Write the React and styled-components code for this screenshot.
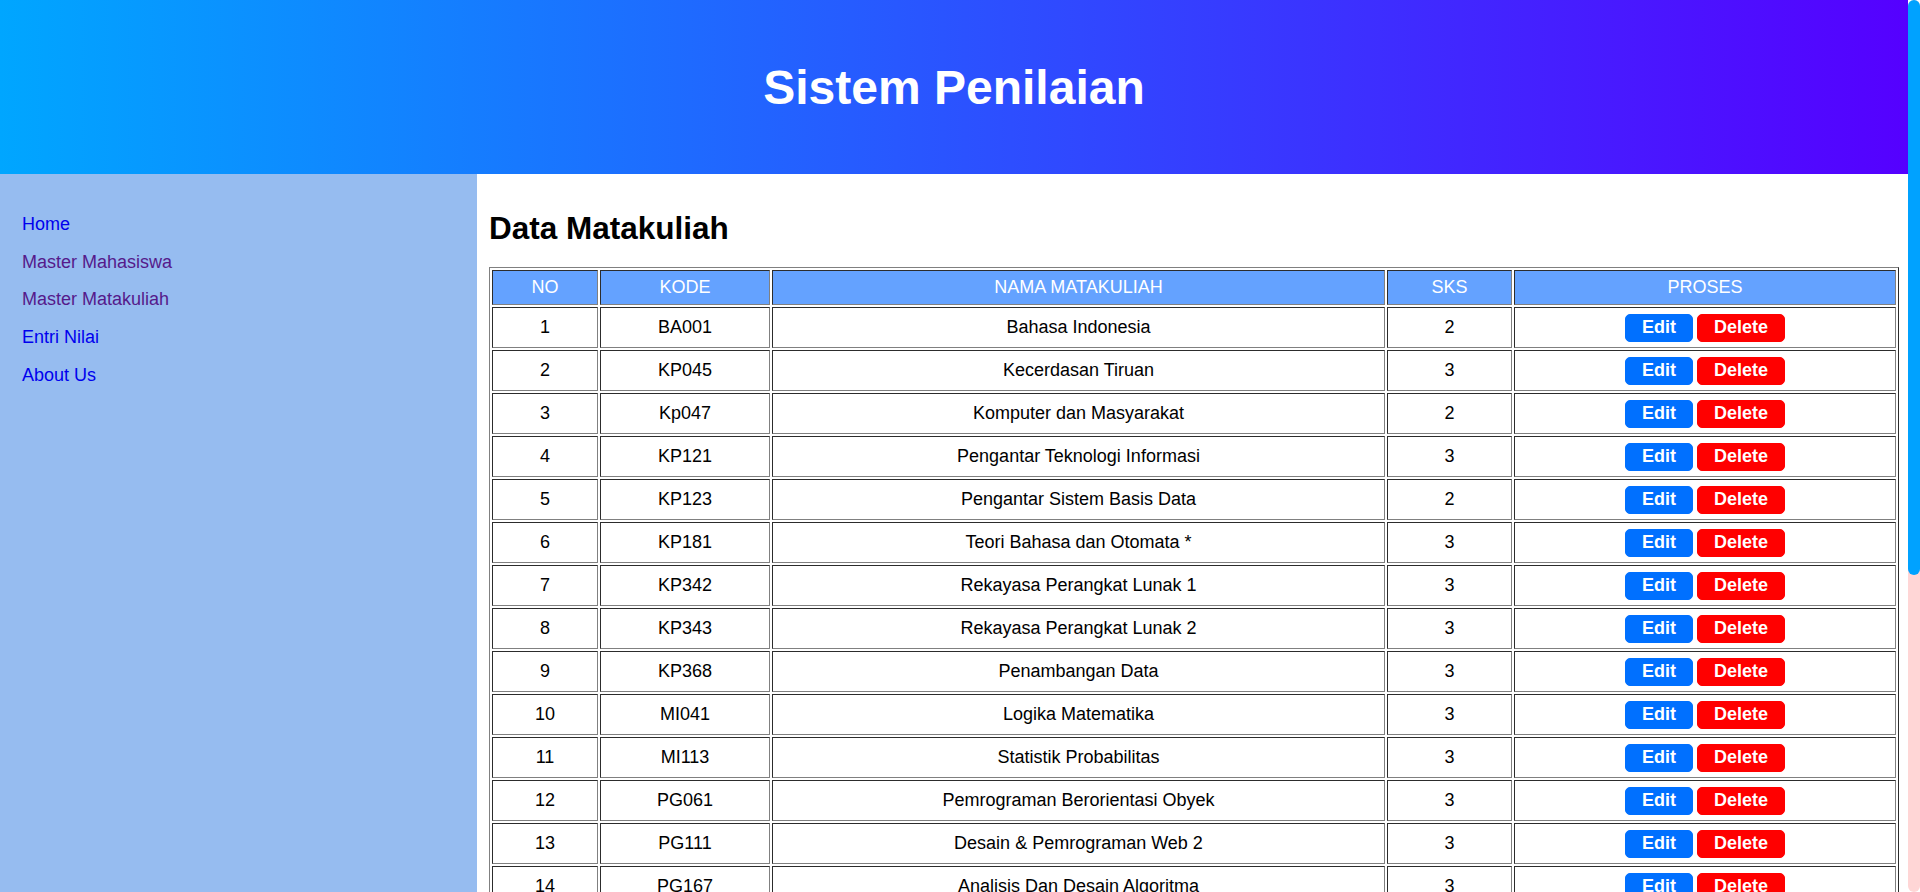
import React from "react";
import styled, { createGlobalStyle } from "styled-components";

const GlobalStyle = createGlobalStyle`
  html, body {
    margin: 0;
    padding: 0;
  }
  body {
    font-family: "Liberation Sans", Arial, sans-serif;
    font-size: 18px;
    color: #000;
    background: #fff;
    margin-right: 12px;
  }
`;

// the page scrollbar as it looks in the browser (custom styled)
const ScrollTrack = styled.div`
  position: fixed;
  top: 0;
  right: 0;
  width: 12px;
  height: 100vh;
  background: #ffd6d6;
  border-radius: 6px;
`;

const ScrollThumb = styled.div`
  width: 12px;
  height: 575px;
  background: #00a2ff;
  border-radius: 6px;
`;

const Header = styled.header`
  height: 174px;
  display: flex;
  align-items: center;
  justify-content: center;
  background: linear-gradient(to right, #00a6ff, #5500ff);
`;

const Title = styled.h1`
  margin: 0;
  color: #fff;
  font-size: 48px;
  font-weight: bold;
`;

const Layout = styled.div`
  display: grid;
  grid-template-columns: 25% 75%;
`;

const Sidebar = styled.nav`
  background: #96bcf0;
  padding: 40px 0 0 22px;
  display: flex;
  flex-direction: column;
  gap: 17px;
`;

const NavLink = styled.a`
  font-size: 18px;
  line-height: 20.7px;
  text-decoration: none;
  color: ${props => (props.visited ? "#551a8b" : "#0000ee")};
`;

const Main = styled.main`
  padding: 0 10px 12px 12px;
`;

const Heading = styled.h2`
  margin: 36px 0 20px;
  font-size: 31.5px;
  line-height: 37px;
  font-weight: bold;
`;

const Table = styled.table`
  width: 100%;
  table-layout: fixed;
  border: 1px outset gray;
  border-spacing: 2px;
`;

const Col = styled.col`
  width: ${props => props.w}px;
`;

const Th = styled.th`
  background: #64a2ff;
  color: #fff;
  font-weight: normal;
  font-size: 18px;
  padding: 6px 5px;
  border: 1px inset gray;
  text-align: center;
`;

const Td = styled.td`
  border: 1px inset gray;
  padding: 5px;
  text-align: center;
  font-size: 18px;
`;

const Actions = styled.div`
  height: 29px;
  display: flex;
  align-items: center;
  justify-content: center;
  gap: 4px;
`;

const Button = styled.button`
  height: 28px;
  padding: 0 16px;
  border: 1px solid ${props => (props.danger ? "#ff0000" : "#0070ff")};
  border-radius: 5px;
  background: ${props => (props.danger ? "#ff0000" : "#0070ff")};
  color: #fff;
  font-family: "Liberation Sans", Arial, sans-serif;
  font-size: 18px;
  font-weight: bold;
  cursor: pointer;
`;

const courses = [
  ["BA001", "Bahasa Indonesia", 2],
  ["KP045", "Kecerdasan Tiruan", 3],
  ["Kp047", "Komputer dan Masyarakat", 2],
  ["KP121", "Pengantar Teknologi Informasi", 3],
  ["KP123", "Pengantar Sistem Basis Data", 2],
  ["KP181", "Teori Bahasa dan Otomata *", 3],
  ["KP342", "Rekayasa Perangkat Lunak 1", 3],
  ["KP343", "Rekayasa Perangkat Lunak 2", 3],
  ["KP368", "Penambangan Data", 3],
  ["MI041", "Logika Matematika", 3],
  ["MI113", "Statistik Probabilitas", 3],
  ["PG061", "Pemrograman Berorientasi Obyek", 3],
  ["PG111", "Desain & Pemrograman Web 2", 3],
  ["PG167", "Analisis Dan Desain Algoritma", 3],
  ["PG211", "Pemrograman Mobile", 3],
  ["SI101", "Sistem Informasi Manajemen", 3],
  ["SI213", "Analisis dan Perancangan Sistem", 3],
  ["TI105", "Jaringan Komputer", 3],
  ["TI207", "Sistem Operasi", 3],
  ["TI301", "Keamanan Komputer", 3],
  ["TI310", "Interaksi Manusia dan Komputer", 2],
  ["TI402", "Metodologi Penelitian", 2],
  ["UM101", "Pendidikan Agama", 2],
  ["UM102", "Pendidikan Pancasila", 2],
  ["UM201", "Bahasa Inggris", 2]
];

const links = [
  { label: "Home", visited: false },
  { label: "Master Mahasiswa", visited: true },
  { label: "Master Matakuliah", visited: true },
  { label: "Entri Nilai", visited: false },
  { label: "About Us", visited: false }
];

export default function App() {
  return (
    <>
      <GlobalStyle />
      <Header>
        <Title>Sistem Penilaian</Title>
      </Header>
      <Layout>
        <Sidebar>
          {links.map(l => (
            <NavLink href="#" key={l.label} visited={l.visited ? 1 : 0}>
              {l.label}
            </NavLink>
          ))}
        </Sidebar>
        <Main>
          <Heading>Data Matakuliah</Heading>
          <Table>
            <colgroup>
              <Col w={106} />
              <Col w={170} />
              <Col w={613} />
              <Col w={125} />
              <Col w={382} />
            </colgroup>
            <thead>
              <tr>
                <Th>NO</Th>
                <Th>KODE</Th>
                <Th>NAMA MATAKULIAH</Th>
                <Th>SKS</Th>
                <Th>PROSES</Th>
              </tr>
            </thead>
            <tbody>
              {courses.map((c, i) => (
                <tr key={c[0]}>
                  <Td>{i + 1}</Td>
                  <Td>{c[0]}</Td>
                  <Td>{c[1]}</Td>
                  <Td>{c[2]}</Td>
                  <Td>
                    <Actions>
                      <Button>Edit</Button>
                      <Button danger={1}>Delete</Button>
                    </Actions>
                  </Td>
                </tr>
              ))}
            </tbody>
          </Table>
        </Main>
      </Layout>
      <ScrollTrack>
        <ScrollThumb />
      </ScrollTrack>
    </>
  );
}
